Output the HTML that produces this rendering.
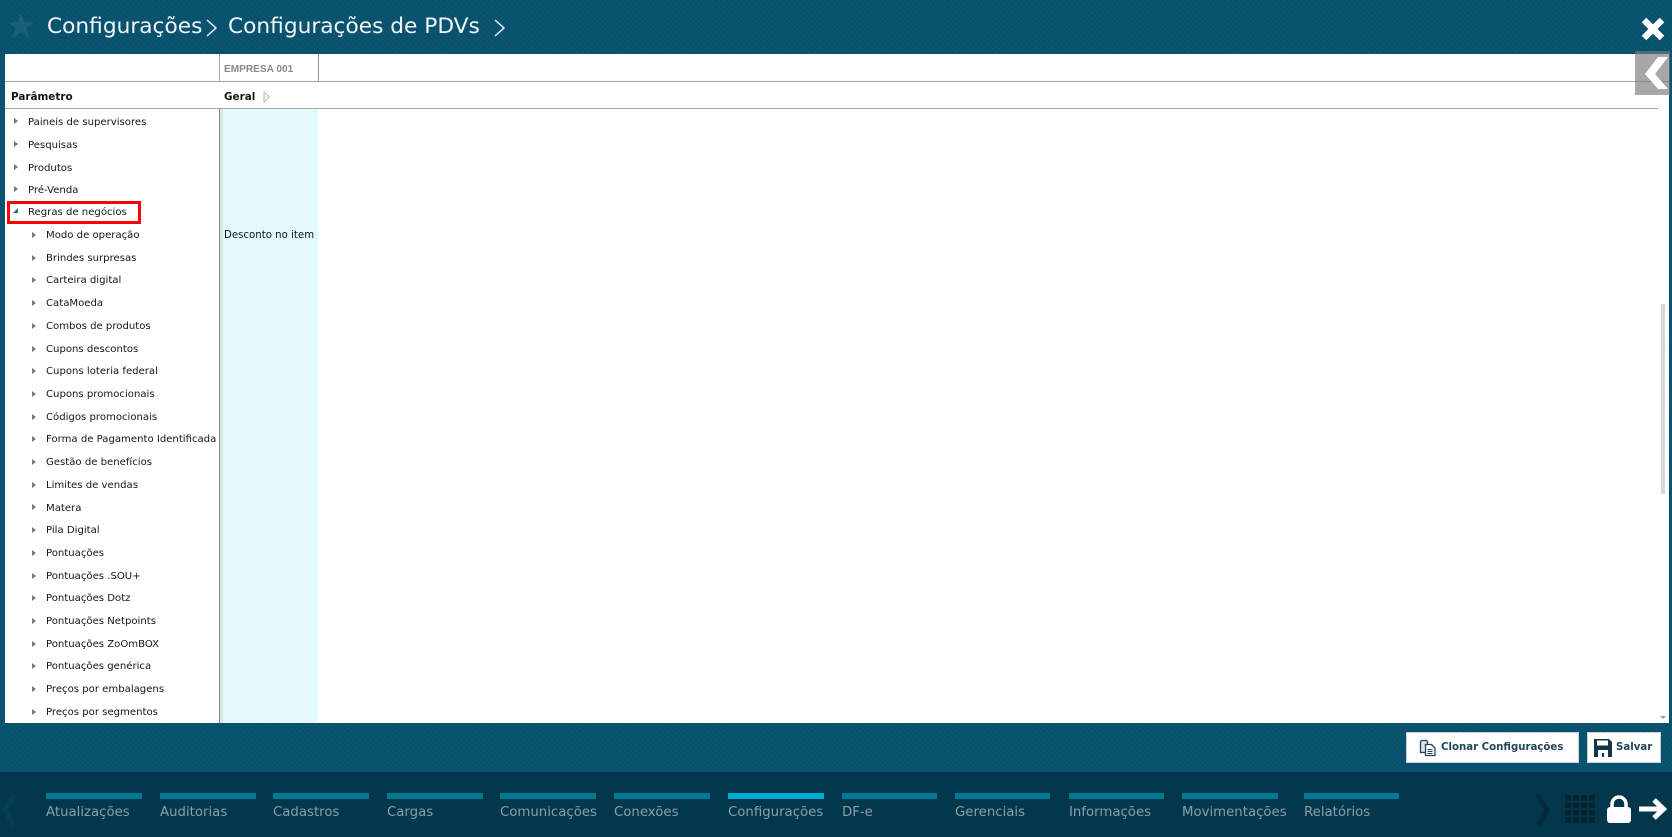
<!DOCTYPE html>
<html lang="pt">
<head>
<meta charset="utf-8">
<title>Configurações de PDVs</title>
<style>
html,body{margin:0;padding:0}
body{width:1672px;height:837px;overflow:hidden;position:relative;background:#07526f;font-family:"DejaVu Sans","Liberation Sans",sans-serif;}
.bgp{position:absolute;left:0;top:0;width:1672px;height:772px;background-color:#07526f;background-image:repeating-linear-gradient(45deg,rgba(255,255,255,.018) 0 2px,transparent 2px 4px),repeating-linear-gradient(-45deg,rgba(0,0,0,.025) 0 2px,transparent 2px 4px)}
.t{position:absolute;white-space:nowrap}
.title{color:#f2f7f9;font-size:21.7px;top:12px;line-height:30px}
.panel{position:absolute;left:5px;top:54px;width:1664px;height:669px;background:#fff;overflow:hidden}
.abs{position:absolute}
.row{position:absolute;white-space:nowrap;font-size:10.1px;line-height:14px;color:#151515}
.arr{position:absolute;width:0;height:0;border-left:4px solid #777;border-top:3.5px solid transparent;border-bottom:3.5px solid transparent}
.nav{position:absolute;left:0;top:772px;width:1672px;height:65px;background:#03384c}
.bar{position:absolute;top:21px;width:96px;height:6px;background:#007a92}
.lab{position:absolute;top:31px;font-size:13.3px;line-height:20px;color:#8a9ea8;white-space:nowrap}
.btn{position:absolute;top:732px;height:31px;background:#fff;border:1px solid #c9d3d8;box-sizing:border-box;color:#1f4557;font-weight:bold;font-size:10.2px;line-height:29px;white-space:nowrap}
</style>
</head>
<body>
<div class="bgp"></div>

<svg class="abs" style="left:6px;top:11px" width="30" height="30" viewBox="0 0 30 30"><path d="M15 2l3.400 9.300h10l-8 6 3 10L15 21.300 6.600 27.300l3-10-8-6h10z" fill="#1a5f7a"/></svg>
<div class="t title" style="left:47px">Configurações</div>
<svg class="abs" style="left:205px;top:18px" width="14" height="20" viewBox="0 0 14 20"><path d="M2 2l9 8-9 8" fill="none" stroke="#e8eff2" stroke-width="1.500"/></svg>
<div class="t title" style="left:228px">Configurações de PDVs</div>
<svg class="abs" style="left:493px;top:18px" width="14" height="20" viewBox="0 0 14 20"><path d="M2 2l9 8-9 8" fill="none" stroke="#e8eff2" stroke-width="1.500"/></svg>
<svg class="abs" style="left:1640px;top:16px" width="26" height="26" viewBox="0 0 26 26"><path d="M4 4l18 18M22 4L4 22" stroke="#fff" stroke-width="6.500" fill="none"/></svg>

<div class="panel">
  <div class="abs" style="left:215px;top:55px;width:98px;height:614px;background:#e2fafd"></div>
  <div class="abs" style="left:215px;top:55px;width:3px;height:614px;background:#d3e6e8"></div>
  <div class="abs" style="left:214px;top:0;width:1px;height:27px;background:#aaa"></div>
  <div class="abs" style="left:313px;top:0;width:1px;height:27px;background:#999"></div>
  <div class="abs" style="left:214px;top:54px;width:1px;height:615px;background:#888"></div>
  <div class="abs" style="left:0;top:27px;width:1664px;height:1px;background:#a6a6a6"></div>
  <div class="abs" style="left:0;top:54px;width:1653px;height:1px;background:#a6a6a6"></div>
  <div class="t" style="left:219px;top:9px;font-family:'Liberation Sans',sans-serif;font-weight:bold;font-size:10.1px;line-height:14px;color:#8a8a8a">EMPRESA 001</div>
  <div class="t" style="left:6px;top:36px;font-size:10.4px;line-height:14px;font-weight:bold;color:#151515">Parâmetro</div>
  <div class="t" style="left:219px;top:36px;font-size:10.4px;line-height:14px;font-weight:bold;color:#151515">Geral</div>
  <svg class="abs" style="left:258px;top:37px" width="8" height="12" viewBox="0 0 8 12"><path d="M1 1l5.500 5-5.500 5z" fill="#f4f4f4" stroke="#bbb"/></svg>
  <div class="t" style="left:219px;top:175px;font-size:10.2px;line-height:14px;color:#151515">Desconto no item</div>

  <div class="arr" style="left:9px;top:64px"></div><div class="row" style="left:23px;top:62px">Paineis de supervisores</div>
  <div class="arr" style="left:9px;top:87px"></div><div class="row" style="left:23px;top:85px">Pesquisas</div>
  <div class="arr" style="left:9px;top:110px"></div><div class="row" style="left:23px;top:108px">Produtos</div>
  <div class="arr" style="left:9px;top:132px"></div><div class="row" style="left:23px;top:130px">Pré-Venda</div>
  <div class="abs" style="left:8px;top:154px;width:0;height:0;border-bottom:5px solid #2b6f86;border-left:5px solid transparent"></div><div class="row" style="left:23px;top:152px">Regras de negócios</div>
  <div class="abs" style="left:2px;top:147px;width:128px;height:17px;border:3px solid #f00;box-sizing:content-box"></div>

  <div class="arr" style="left:27px;top:178px"></div><div class="row" style="left:41px;top:175px">Modo de operação</div>
  <div class="arr" style="left:27px;top:201px"></div><div class="row" style="left:41px;top:198px">Brindes surpresas</div>
  <div class="arr" style="left:27px;top:223px"></div><div class="row" style="left:41px;top:220px">Carteira digital</div>
  <div class="arr" style="left:27px;top:246px"></div><div class="row" style="left:41px;top:243px">CataMoeda</div>
  <div class="arr" style="left:27px;top:269px"></div><div class="row" style="left:41px;top:266px">Combos de produtos</div>
  <div class="arr" style="left:27px;top:292px"></div><div class="row" style="left:41px;top:289px">Cupons descontos</div>
  <div class="arr" style="left:27px;top:314px"></div><div class="row" style="left:41px;top:311px">Cupons loteria federal</div>
  <div class="arr" style="left:27px;top:337px"></div><div class="row" style="left:41px;top:334px">Cupons promocionais</div>
  <div class="arr" style="left:27px;top:360px"></div><div class="row" style="left:41px;top:357px">Códigos promocionais</div>
  <div class="arr" style="left:27px;top:382px"></div><div class="row" style="left:41px;top:379px">Forma de Pagamento Identificada</div>
  <div class="arr" style="left:27px;top:405px"></div><div class="row" style="left:41px;top:402px">Gestão de benefícios</div>
  <div class="arr" style="left:27px;top:428px"></div><div class="row" style="left:41px;top:425px">Limites de vendas</div>
  <div class="arr" style="left:27px;top:450px"></div><div class="row" style="left:41px;top:448px">Matera</div>
  <div class="arr" style="left:27px;top:473px"></div><div class="row" style="left:41px;top:470px">Pila Digital</div>
  <div class="arr" style="left:27px;top:496px"></div><div class="row" style="left:41px;top:493px">Pontuações</div>
  <div class="arr" style="left:27px;top:519px"></div><div class="row" style="left:41px;top:516px">Pontuações .SOU+</div>
  <div class="arr" style="left:27px;top:541px"></div><div class="row" style="left:41px;top:538px">Pontuações Dotz</div>
  <div class="arr" style="left:27px;top:564px"></div><div class="row" style="left:41px;top:561px">Pontuações Netpoints</div>
  <div class="arr" style="left:27px;top:587px"></div><div class="row" style="left:41px;top:584px">Pontuações ZoOmBOX</div>
  <div class="arr" style="left:27px;top:609px"></div><div class="row" style="left:41px;top:606px">Pontuações genérica</div>
  <div class="arr" style="left:27px;top:632px"></div><div class="row" style="left:41px;top:629px">Preços por embalagens</div>
  <div class="arr" style="left:27px;top:655px"></div><div class="row" style="left:41px;top:652px">Preços por segmentos</div>

  <div class="abs" style="left:1656px;top:250px;width:4px;height:190px;background:#d8d8d8"></div>
  <div class="abs" style="left:1655px;top:662px;width:0;height:0;border-top:3px solid #999;border-left:3px solid transparent;border-right:3px solid transparent"></div>
</div>

<div class="abs" style="left:1635px;top:51px;width:35px;height:44px;background:rgba(120,120,120,.65)"></div>
<svg class="abs" style="left:1644px;top:56px" width="26" height="34" viewBox="0 0 26 34"><path d="M24 1H14L1 18l13 15h10L11 18z" fill="#fff"/></svg>

<div class="btn" style="left:1406px;width:173px;padding-left:34px">Clonar Configurações</div>
<svg class="abs" style="left:1419px;top:739px" width="18" height="18" viewBox="0 0 18 18"><path d="M1.500 3a1.500 1.500 0 0 1 1.500-1.500h4a1.500 1.500 0 0 1 1.500 1.500v10.500h-7z" fill="#dfe6ea" stroke="#1f4557" stroke-width="1.300"/><path d="M6.500 5.500h6l3.500 3.500v7.500h-9.500z" fill="#fff" stroke="#1f4557" stroke-width="1.300"/><path d="M8.500 10.500h5M8.500 12.500h5M8.500 14.500h5" stroke="#1f4557"/></svg>
<div class="btn" style="left:1587px;width:74px;padding-left:28px">Salvar</div>
<svg class="abs" style="left:1594px;top:739px" width="18" height="18" viewBox="0 0 18 18"><path d="M0 0h15l3 3v15H0z" fill="#11384a"/><path d="M3 1.500h11v5H3z" fill="#fff"/><path d="M4 11h10v7H4z" fill="#fff"/><path d="M8 14h2v4H8z" fill="#11384a"/></svg>

<div class="nav">
  <svg class="abs" style="left:0;top:22px" width="18" height="32" viewBox="0 0 18 32"><path d="M14 1L5 16l9 15" fill="none" stroke="#053f55" stroke-width="5"/></svg>
  <div class="bar" style="left:46px"></div><div class="lab" style="left:46px">Atualizações</div>
  <div class="bar" style="left:160px"></div><div class="lab" style="left:160px">Auditorias</div>
  <div class="bar" style="left:273px"></div><div class="lab" style="left:273px">Cadastros</div>
  <div class="bar" style="left:387px"></div><div class="lab" style="left:387px">Cargas</div>
  <div class="bar" style="left:500px"></div><div class="lab" style="left:500px">Comunicações</div>
  <div class="bar" style="left:614px"></div><div class="lab" style="left:614px">Conexões</div>
  <div class="bar" style="left:728px;background:#00acd0"></div><div class="lab" style="left:728px">Configurações</div>
  <div class="bar" style="left:842px;width:95px"></div><div class="lab" style="left:842px">DF-e</div>
  <div class="bar" style="left:955px;width:95px"></div><div class="lab" style="left:955px">Gerenciais</div>
  <div class="bar" style="left:1069px;width:95px"></div><div class="lab" style="left:1069px">Informações</div>
  <div class="bar" style="left:1182px;width:96px"></div><div class="lab" style="left:1182px">Movimentações</div>
  <div class="bar" style="left:1304px;width:95px"></div><div class="lab" style="left:1304px">Relatórios</div>
  <svg class="abs" style="left:1534px;top:22px" width="18" height="32" viewBox="0 0 18 32"><path d="M4 1l9 15-9 15" fill="none" stroke="#052a3a" stroke-width="5"/></svg>
  <svg class="abs" style="left:1565px;top:23px" width="30" height="28" viewBox="0 0 30 30" preserveAspectRatio="none" fill="#05222f"><rect x="0" y="0" width="6" height="6"/><rect x="8" y="0" width="6" height="6"/><rect x="16" y="0" width="6" height="6"/><rect x="24" y="0" width="6" height="6"/><rect x="0" y="8" width="6" height="6"/><rect x="8" y="8" width="6" height="6"/><rect x="16" y="8" width="6" height="6"/><rect x="24" y="8" width="6" height="6"/><rect x="0" y="16" width="6" height="6"/><rect x="8" y="16" width="6" height="6"/><rect x="16" y="16" width="6" height="6"/><rect x="24" y="16" width="6" height="6"/><rect x="0" y="24" width="6" height="6"/><rect x="8" y="24" width="6" height="6"/><rect x="16" y="24" width="6" height="6"/><rect x="24" y="24" width="6" height="6"/></svg>
  <svg class="abs" style="left:1607px;top:23px" width="24" height="28" viewBox="0 0 24 28"><path d="M5 13V9a7 7 0 0 1 14 0v4" fill="none" stroke="#fff" stroke-width="3.500"/><rect x="0" y="12" width="24" height="16" rx="3" fill="#fff"/></svg>
  <svg class="abs" style="left:1639px;top:26px" width="29" height="22" viewBox="0 0 29 22"><path d="M0 11h24M15 2l9.500 9-9.500 9" fill="none" stroke="#fff" stroke-width="5"/></svg>
</div>
</body>
</html>
